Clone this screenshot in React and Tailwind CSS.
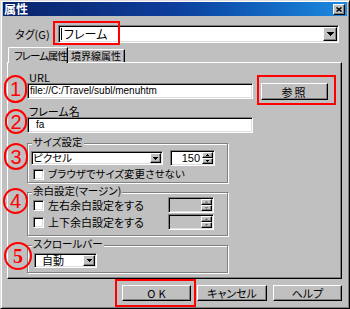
import React from "react";

const sunken =
  "border border-t-[#808080] border-l-[#808080] border-b-white border-r-white shadow-[inset_1px_1px_0_#000,inset_-1px_-1px_0_#dfdfdf]";
const raised =
  "border border-t-white border-l-white border-b-black border-r-black shadow-[inset_-1px_-1px_0_#808080]";

function Tri({ big, color = "#000" }) {
  if (big) {
    return (
      <svg width="7" height="4" viewBox="0 0 7 4" shapeRendering="crispEdges">
        <path d="M0 0H7V1H6V2H5V3H4V4H3V3H2V2H1V1H0Z" fill={color} />
      </svg>
    );
  }
  return (
    <svg width="5" height="3" viewBox="0 0 5 3" shapeRendering="crispEdges">
      <path d="M0 0H5V1H4V2H3V3H2V2H1V1H0Z" fill={color} />
    </svg>
  );
}

function DropBtn({ className = "", big }) {
  return (
    <div
      className={`${raised} bg-[#c0c0c0] shrink-0 flex items-center justify-center ${className}`}
    >
      <Tri big={big} />
    </div>
  );
}

function Spin({ value, disabled, className = "" }) {
  return (
    <div
      className={`${sunken} ${disabled ? "bg-[#c0c0c0]" : "bg-white"} h-[16px] p-[1px] flex items-stretch shrink-0 ${className}`}
    >
      <div className="flex-1 text-right pr-[2px] font-['Liberation_Sans',sans-serif] text-[11px] leading-[12px]">
        {value}
      </div>
      <div className="w-[11px] flex flex-col">
        <div className={`${raised} bg-[#c0c0c0] h-[6px] flex items-center justify-center`}>
          <svg width="3" height="2" viewBox="0 0 3 2" shapeRendering="crispEdges">
            <path d="M1 0H2V1H3V2H0V1H1Z" fill={disabled ? "#808080" : "#000"} />
          </svg>
        </div>
        <div className={`${raised} bg-[#c0c0c0] h-[6px] flex items-center justify-center`}>
          <svg width="3" height="2" viewBox="0 0 3 2" shapeRendering="crispEdges">
            <path d="M0 0H3V1H2V2H1V1H0Z" fill={disabled ? "#808080" : "#000"} />
          </svg>
        </div>
      </div>
    </div>
  );
}

function Check() {
  return <div className={`${sunken} bg-white w-[11px] h-[11px] shrink-0`} />;
}

function Group({ label, className = "", children }) {
  return (
    <div
      className={`relative border border-[#808080] shadow-[inset_1px_1px_0_#fff,1px_1px_0_#fff] ${className}`}
    >
      <span className="absolute left-[4px] top-[-8px] px-[1px] bg-[#c0c0c0] text-[10.5px] leading-[11px] whitespace-nowrap">
        {label}
      </span>
      {children}
    </div>
  );
}

function Btn({ className = "", children }) {
  return (
    <div
      className={`${raised} bg-[#c0c0c0] flex items-center justify-center leading-[12px] ${className}`}
    >
      {children}
    </div>
  );
}

function Circle({ n, className = "", serif }) {
  return (
    <div
      className={`absolute border-2 border-[#ff0000] rounded-full flex items-center justify-center text-[#ff0000] text-[20px] leading-none ${
        serif ? "font-['Liberation_Serif',serif] font-bold" : "font-['Liberation_Sans',sans-serif]"
      } ${className}`}
    >
      {n}
    </div>
  );
}

export default function App() {
  return (
    <div className="relative w-[350px] h-[309px] overflow-hidden bg-[#c0c0c0] border border-t-[#dfdfdf] border-l-[#dfdfdf] border-r-black border-b-black shadow-[inset_1px_1px_0_#fff,inset_-1px_-1px_0_#808080] px-[2px] pt-[1px] text-black font-['Noto_Sans_CJK_JP',sans-serif] [font-feature-settings:'palt'] text-[11px] leading-[12px]">
      {/* title bar */}
      <div className="h-[14px] bg-linear-to-r from-[#0a246a] via-[#0c3e9c] to-[#1d8ae0] flex items-center pl-[1px] pr-[2px]">
        <span className="text-white font-bold text-[12px] leading-[14px]">属性</span>
        <div className="flex-1" />
        <div className={`${raised} bg-[#c0c0c0] w-[12px] h-[11px] flex items-center justify-center`}>
          <svg width="6" height="5" viewBox="0 0 6 5">
            <path d="M0.5 0.5L5.5 4.5M5.5 0.5L0.5 4.5" stroke="#000" strokeWidth="1.5" />
          </svg>
        </div>
      </div>

      {/* tag row */}
      <div className="mt-[9px] flex items-center h-[18px]">
        <div className="w-[55px] pl-[12px] text-[11px]">タグ(G)</div>
        <div className={`${sunken} bg-white w-[281px] h-[18px] p-[1px] flex items-center`}>
          <div className="w-px h-[12px] bg-black ml-[1px]" />
          <span className="ml-[2px] text-[12px] leading-[14px]">フレーム</span>
          <div className="flex-1" />
          <DropBtn big className="w-[14px] h-[14px]" />
        </div>
      </div>

      {/* tabs */}
      <div className="mt-[4px] ml-[5px] h-[16px] flex items-end relative z-10">
        <div className="w-[60px] h-[16px] bg-[#c0c0c0] border-l border-t border-r border-l-white border-t-white border-r-black rounded-tl-[2px] shadow-[inset_-1px_0_0_#808080] pl-[5px] pt-[2px] text-[10.5px] tracking-[-1px] whitespace-nowrap overflow-hidden">
          フレーム属性
        </div>
        <div className="w-[57px] h-[13px] mb-[1px] bg-[#c0c0c0] border-t border-r border-t-white border-r-black shadow-[inset_-1px_0_0_#808080] pl-[3px] text-[10px] leading-[12px] whitespace-nowrap overflow-hidden">
          境界線属性
        </div>
      </div>

      {/* tab panel */}
      <div className="-mt-[1px] ml-[4px] w-[335px] h-[217px] border border-t-white border-l-white border-r-black border-b-black shadow-[inset_-1px_-1px_0_#808080] pl-[19px] pt-[8px]">
        <div className="pl-[2px] h-[12px]">URL</div>
        <div className="flex items-start h-[17px]">
          <div className={`${sunken} bg-white w-[226px] h-[16px] p-[1px] flex items-center`}>
            <span className="ml-[1px] whitespace-nowrap font-['Liberation_Sans',sans-serif] text-[10px] leading-[12px]">
              file://C:/Travel/subl/menuhtm
            </span>
          </div>
          <Btn className="ml-[8px] w-[67px] h-[17px] tracking-[2px]">参照</Btn>
        </div>

        <div className="mt-[5px] pl-[2px] h-[12px]">フレーム名</div>
        <div className={`${sunken} bg-white w-[226px] h-[16px] p-[1px] flex items-center`}>
          <span className="ml-[7px] font-['Liberation_Sans',sans-serif] text-[10px] leading-[12px]">fa</span>
        </div>

        <Group label="サイズ設定" className="mt-[10px] w-[201px] h-[40px]">
          <div className="pt-[6px] pl-[3px] flex items-start">
            <div className={`${sunken} bg-white mt-[1px] w-[132px] h-[14px] p-[1px] flex items-center`}>
              <span className="text-[10.5px] leading-[10px] whitespace-nowrap">ピクセル</span>
              <div className="flex-1" />
              <DropBtn className="w-[11px] h-[10px]" />
            </div>
            <Spin value="150" className="ml-[7px] w-[45px]" />
          </div>
          <div className="mt-[2px] pl-[5px] flex items-center h-[12px]">
            <Check />
            <span className="ml-[4px] whitespace-nowrap text-[10.5px]">ブラウザでサイズ変更させない</span>
          </div>
        </Group>

        <Group label="余白設定(マージン)" className="mt-[9px] w-[201px] h-[44px]">
          <div className="pt-[4px] pl-[5px] pr-[13px] flex flex-col gap-[1px]">
            <div className="flex items-center h-[16px]">
              <Check />
              <span className="ml-[4px] whitespace-nowrap leading-[11px]">左右余白設定をする</span>
              <div className="flex-1" />
              <Spin value="" disabled className="w-[46px]" />
            </div>
            <div className="flex items-center h-[16px]">
              <Check />
              <span className="ml-[4px] whitespace-nowrap leading-[11px]">上下余白設定をする</span>
              <div className="flex-1" />
              <Spin value="" disabled className="w-[46px]" />
            </div>
          </div>
        </Group>

        <Group label="スクロールバー" className="mt-[9px] w-[201px] h-[28px]">
          <div className="pt-[7px] pl-[6px]">
            <div className={`${sunken} bg-white w-[63px] h-[15px] p-[1px] flex items-center`}>
              <span className="ml-[6px] text-[11px] leading-[11px]">自動</span>
              <div className="flex-1" />
              <DropBtn className="w-[12px] h-[11px]" />
            </div>
          </div>
        </Group>
      </div>

      {/* bottom buttons */}
      <div className="mt-[6px] flex justify-end gap-[6px] pr-[5px]">
        <Btn className="w-[69px] h-[16px] tracking-[3px] pl-[3px]">OK</Btn>
        <Btn className="w-[70px] h-[16px]">キャンセル</Btn>
        <Btn className="w-[69px] h-[16px]">ヘルプ</Btn>
      </div>

      {/* annotations */}
      <div className="absolute left-[52px] top-[20px] w-[67px] h-[24px] border-2 border-[#ff0000]" />
      <div className="absolute left-[256px] top-[74px] w-[79px] h-[30px] border-2 border-[#ff0000]" />
      <div className="absolute left-[114px] top-[278px] w-[81px] h-[28px] border-2 border-[#ff0000]" />

      <Circle n="1" className="left-[3px] top-[74px] w-[23px] h-[28px]" />
      <Circle n="2" className="left-[4px] top-[108px] w-[22px] h-[25px]" />
      <Circle n="3" className="left-[3px] top-[142px] w-[24px] h-[27px]" />
      <Circle n="4" className="left-[2px] top-[187px] w-[25px] h-[26px]" />
      <Circle n="5" serif className="left-[3px] top-[241px] w-[28px] h-[28px]" />
    </div>
  );
}
